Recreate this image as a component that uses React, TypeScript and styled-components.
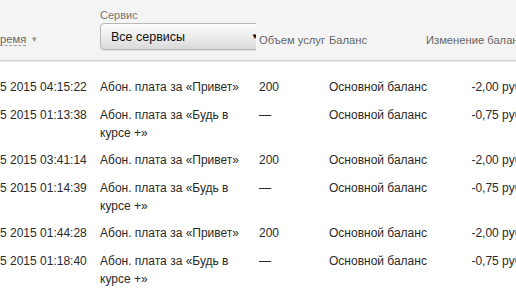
import React from "react";
import styled, { createGlobalStyle } from "styled-components";

const GlobalStyle = createGlobalStyle`
  html, body {
    margin: 0;
    padding: 0;
    background: #fff;
    overflow: hidden;
  }
  body {
    font-family: "Liberation Sans", Arial, sans-serif;
    font-size: 12px;
    color: #2a2a2a;
  }
`;

const COLUMNS = "100px 159px 70px 97px 110px";

const Table = styled.div`
  width: 536px;
`;

const Head = styled.div`
  display: grid;
  grid-template-columns: ${COLUMNS};
  height: 60px;
  background: #f4f4f4;
  border-bottom: 1px solid #d2d2d2;
  box-shadow: 0 1px 0 #ececec;
`;

const HeadCell = styled.div`
  align-self: end;
  padding-bottom: 12px;
  line-height: 16px;
  font-size: 11.2px;
  color: #666;
  white-space: nowrap;
`;

const SortLink = styled.span`
  border-bottom: 1px dashed #9a9a9a;
  color: #666;
`;

const SortArrow = styled.span`
  display: inline-block;
  margin-left: 4px;
  font-size: 8px;
  color: #999;
  vertical-align: 1px;
`;

const FilterCell = styled.div`
  align-self: end;
  display: flex;
  flex-direction: column;
  width: 156px;
  overflow: hidden;
  padding-bottom: 10px;
`;

const FilterLabel = styled.div`
  font-size: 11px;
  line-height: 14px;
  color: #777;
  margin-bottom: 1px;
`;

const Select = styled.div`
  box-sizing: border-box;
  width: 172px;
  height: 27px;
  display: flex;
  align-items: center;
  padding-left: 10px;
  border: 1px solid #b8b8b8;
  border-radius: 4px;
  background: linear-gradient(#fdfdfd, #e9e9e9 60%, #dadada);
  box-shadow: 0 1px 1px rgba(0, 0, 0, 0.08);
  font-size: 12.5px;
  color: #111;
  position: relative;
`;

const SelectArrow = styled.span`
  position: absolute;
  left: 150px;
  top: 8px;
  font-size: 8px;
  color: #111;
`;

const Body = styled.div`
  padding-top: 12px;
`;

const Row = styled.div`
  display: grid;
  grid-template-columns: ${COLUMNS};
  padding: 5px 0 4.5px;
  line-height: 18px;
`;

const Cell = styled.div<{ $right?: boolean; $wrap?: boolean }>`
  padding-right: ${(p) => (p.$right ? "11px" : "6px")};
  text-align: ${(p) => (p.$right ? "right" : "left")};
  white-space: ${(p) => (p.$wrap ? "normal" : "nowrap")};
`;

const DateCell = styled(Cell)`
  overflow: hidden;
`;

type Item = { date: string; service: string; volume: string; change: string };

const items: Item[] = [
  { date: "5 2015 04:15:22", service: "Абон. плата за «Привет»", volume: "200", change: "-2,00 руб." },
  { date: "5 2015 01:13:38", service: "Абон. плата за «Будь в курсе +»", volume: "—", change: "-0,75 руб." },
  { date: "5 2015 03:41:14", service: "Абон. плата за «Привет»", volume: "200", change: "-2,00 руб." },
  { date: "5 2015 01:14:39", service: "Абон. плата за «Будь в курсе +»", volume: "—", change: "-0,75 руб." },
  { date: "5 2015 01:44:28", service: "Абон. плата за «Привет»", volume: "200", change: "-2,00 руб." },
  { date: "5 2015 01:18:40", service: "Абон. плата за «Будь в курсе +»", volume: "—", change: "-0,75 руб." },
];

export default function App() {
  return (
    <>
      <GlobalStyle />
      <Table>
        <Head>
          <HeadCell>
            <SortLink>ремя</SortLink>
            <SortArrow>▼</SortArrow>
          </HeadCell>
          <FilterCell>
            <FilterLabel>Сервис</FilterLabel>
            <Select>
              Все сервисы
              <SelectArrow>▼</SelectArrow>
            </Select>
          </FilterCell>
          <HeadCell>Объем услуг</HeadCell>
          <HeadCell>Баланс</HeadCell>
          <HeadCell>Изменение баланса</HeadCell>
        </Head>
        <Body>
          {items.map((it, i) => (
            <Row key={i}>
              <DateCell>{it.date}</DateCell>
              <Cell $wrap>{it.service}</Cell>
              <Cell>{it.volume}</Cell>
              <Cell>Основной баланс</Cell>
              <Cell $right>{it.change}</Cell>
            </Row>
          ))}
        </Body>
      </Table>
    </>
  );
}
